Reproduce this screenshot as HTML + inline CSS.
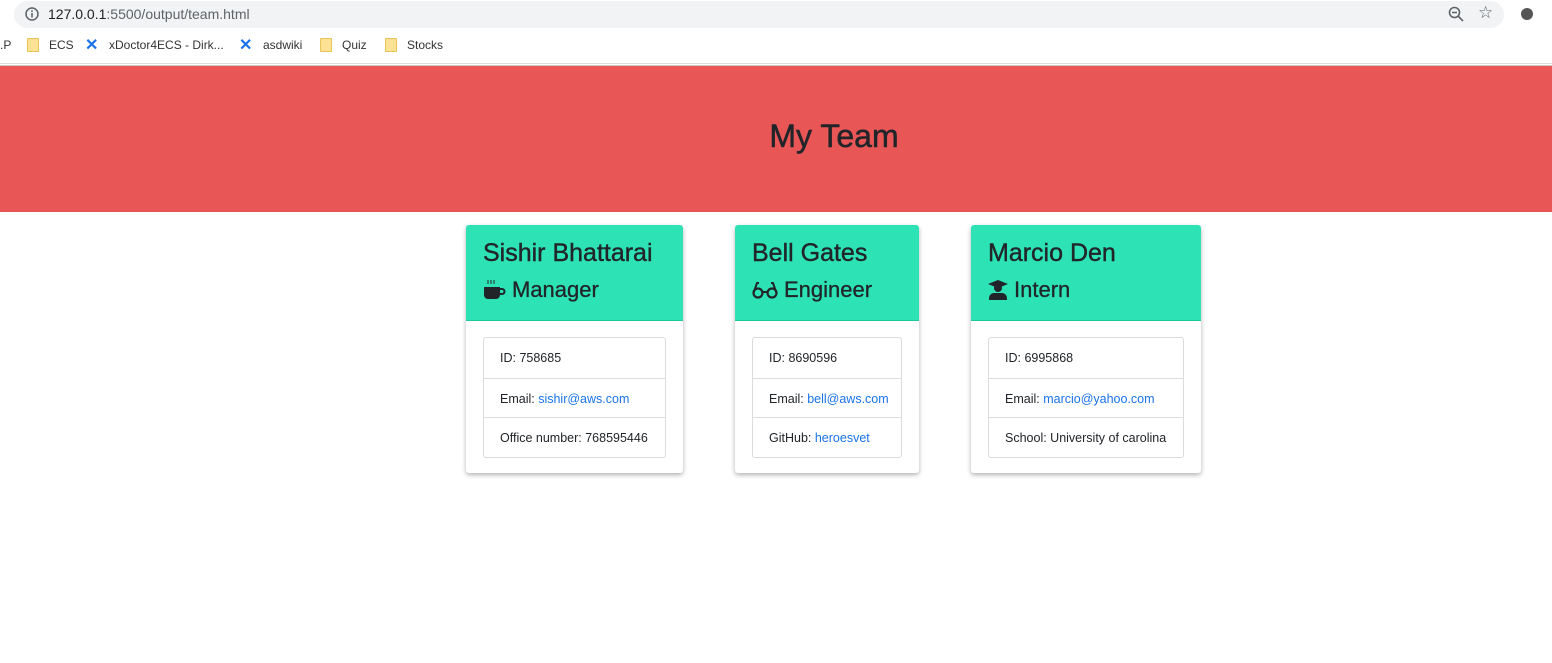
<!DOCTYPE html>
<html><head><meta charset="utf-8"><style>
*{box-sizing:border-box;margin:0;padding:0}
body{width:1552px;height:663px;overflow:hidden;background:#fff;font-family:"Liberation Sans",sans-serif;color:#212529;position:relative}
.top{position:absolute;left:0;top:0;width:1552px;height:30px;background:#fff}
.pill{position:absolute;left:14px;top:1px;width:1490px;height:27px;border-radius:14px;background:#f1f3f4}
.url{position:absolute;left:48px;top:6px;font-size:14px;color:#202124}
.url span{color:#5f6368}
.bm{position:absolute;top:38px;font-size:12px;color:#333}
.fold{position:absolute;top:38px;width:12px;height:14px;background:#fde293;border:1px solid #e8c35a;border-radius:1px}
.hdr{position:absolute;left:0;top:65px;width:1552px;height:147px;background:#e85656;border-top:1px solid #ccc}
.hdr h1{position:absolute;left:0;width:1668px;text-align:center;top:52px;font-size:32px;font-weight:500;color:#212529;-webkit-text-stroke:0.5px #212529}
.card{position:absolute;top:225px;height:248px;background:#fff;border-radius:3px;box-shadow:0 2px 5px rgba(0,0,0,.3)}
.ch{height:96px;background:#2de2b5;border-radius:3px 3px 0 0;border-bottom:1px solid #1fc79c;padding:13px 17px 12px}
.ch .n{font-size:25px;line-height:30px;-webkit-text-stroke:0.4px #212529}
.ch .r{font-size:22px;line-height:30px;margin-top:7px;display:flex;align-items:center;gap:6px;-webkit-text-stroke:0.3px #212529}
.lg{position:absolute;left:17px;right:17px;top:112px;border:1px solid #dcdcdc;border-radius:3px}
.lg div{height:39.5px;line-height:40px;padding-left:16px;font-size:12.5px;border-top:1px solid #dcdcdc}
.lg div:first-child{border-top:none}
a{color:#1a73e8;text-decoration:none}
</style></head><body>
<div class="top"><div class="pill"></div>
<svg style="position:absolute;left:25px;top:7px" width="14" height="14"><circle cx="7" cy="7" r="6" fill="none" stroke="#5f6368" stroke-width="1.5"/><rect x="6.2" y="6" width="1.6" height="4.5" fill="#5f6368"/><rect x="6.2" y="3.3" width="1.6" height="1.6" fill="#5f6368"/></svg>
<div class="url">127.0.0.1<span>:5500/output/team.html</span></div>
<svg style="position:absolute;left:1448px;top:6px" width="16" height="16"><circle cx="6.5" cy="6.5" r="5" fill="none" stroke="#5f6368" stroke-width="1.6"/><path d="M10 10l5 5M4 6.5h5" stroke="#5f6368" stroke-width="1.6"/></svg>
<div style="position:absolute;left:1478px;top:3px;font-size:17px;color:#5f6368">☆</div>
<div style="position:absolute;left:1521px;top:8px;width:12px;height:12px;border-radius:6px;background:#555"></div>
</div>
<div style="position:absolute;left:0;top:30px;width:1552px;height:34px;background:#fff;border-bottom:1px solid #ddd"></div>
<div class="bm" style="left:0">.P</div>
<div class="fold" style="left:27px"></div><div class="bm" style="left:49px">ECS</div>
<div class="bm" style="left:85px;color:#1a73e8;font-weight:bold;font-size:16px;top:35px">✕</div><div class="bm" style="left:109px">xDoctor4ECS - Dirk...</div>
<div class="bm" style="left:239px;color:#1a73e8;font-weight:bold;font-size:16px;top:35px">✕</div><div class="bm" style="left:263px">asdwiki</div>
<div class="fold" style="left:320px"></div><div class="bm" style="left:342px">Quiz</div>
<div class="fold" style="left:385px"></div><div class="bm" style="left:407px">Stocks</div>
<div class="hdr"><h1>My Team</h1></div>

<div class="card" style="left:466px;width:217px"><div class="ch"><div class="n">Sishir Bhattarai</div><div class="r"><svg width="23" height="20" viewBox="0 0 23 20"><path d="M5 0v4M8 0v4M11 0v4" stroke="#212529" stroke-width="1"/><path d="M1 7h16v8a4 4 0 0 1-4 4H5a4 4 0 0 1-4-4z" fill="#212529"/><path d="M17 9h2a2.5 2.5 0 0 1 0 5h-2" fill="none" stroke="#212529" stroke-width="2"/></svg>Manager</div></div>
<div class="lg"><div>ID: 758685</div><div>Email: <a>sishir@aws.com</a></div><div>Office number: 768595446</div></div></div>

<div class="card" style="left:735px;width:184px"><div class="ch"><div class="n">Bell Gates</div><div class="r"><svg width="26" height="18" viewBox="0 0 26 18"><circle cx="6" cy="12" r="4.5" fill="none" stroke="#212529" stroke-width="2.2"/><circle cx="20" cy="12" r="4.5" fill="none" stroke="#212529" stroke-width="2.2"/><path d="M10 11h6M1.5 12L5 2h2M24.5 12L21 2h-2" fill="none" stroke="#212529" stroke-width="2"/></svg>Engineer</div></div>
<div class="lg"><div>ID: 8690596</div><div>Email: <a>bell@aws.com</a></div><div>GitHub: <a>heroesvet</a></div></div></div>

<div class="card" style="left:971px;width:230px"><div class="ch"><div class="n">Marcio Den</div><div class="r"><svg width="20" height="20" viewBox="0 0 20 20"><path d="M10 0L20 4 10 8 0 4z" fill="#212529"/><circle cx="10" cy="8" r="4" fill="#212529"/><path d="M1 20v-2a5 5 0 0 1 5-5h8a5 5 0 0 1 5 5v2z" fill="#212529"/></svg>Intern</div></div>
<div class="lg"><div>ID: 6995868</div><div>Email: <a>marcio@yahoo.com</a></div><div>School: University of carolina</div></div></div>
</body></html>
